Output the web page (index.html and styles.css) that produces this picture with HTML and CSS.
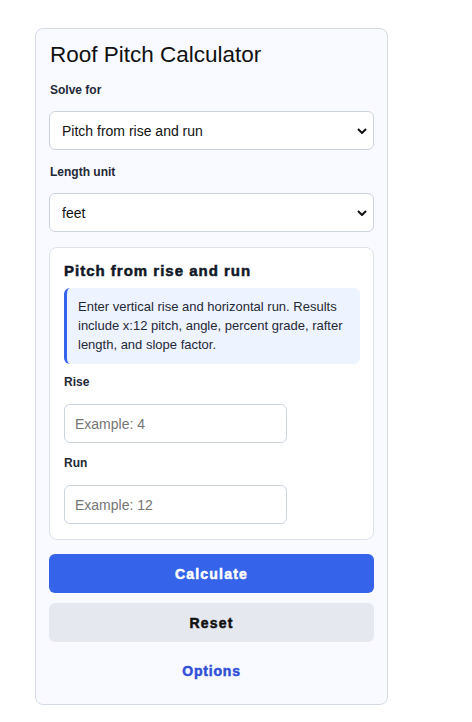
FILE: index.html
```html
<!DOCTYPE html>
<html lang="en">
<head>
    <meta charset="UTF-8">
    <meta name="viewport" content="width=device-width, initial-scale=1.0">
    <title>Roof Pitch Calculator</title>
    <link rel="stylesheet" href="styles.css">
</head>
<body>

    <div class="calc">
        <h1>Roof Pitch Calculator</h1>

        <label class="field-label first" for="mode">Solve for</label>
        <select id="mode" class="field-select">
            <option>Pitch from rise and run</option>
            <option>Rise from pitch and run</option>
            <option>Run from pitch and rise</option>
        </select>

        <label class="field-label" for="unit">Length unit</label>
        <select id="unit" class="field-select">
            <option>feet</option>
            <option>inches</option>
            <option>meters</option>
        </select>

        <div class="panel">
            <h2>Pitch from rise and run</h2>
            <p class="hint">Enter vertical rise and horizontal run. Results include x:12 pitch, angle, percent grade, rafter length, and slope factor.</p>

            <label class="field-label" for="rise">Rise</label>
            <input id="rise" class="field-input" type="text" placeholder="Example: 4">

            <label class="field-label" for="run">Run</label>
            <input id="run" class="field-input" type="text" placeholder="Example: 12">
        </div>

        <button class="btn btn-primary">Calculate</button>
        <button class="btn btn-secondary">Reset</button>

        <a class="options-link" href="#">Options</a>
    </div>

</body>
</html>
```

FILE: styles.css
```css
* {
    box-sizing: border-box;
}
body {
    margin: 0;
    padding: 28px 0 0 35px;
    background: #ffffff;
    font-family: "Liberation Sans", Arial, sans-serif;
    color: #111827;
}
.calc {
    width: 353px;
    background: #f8faff;
    border: 1px solid #d5dbe5;
    border-radius: 8px;
    padding: 11px 13px 25px 13px;
    display: flex;
    flex-direction: column;
}
h1 {
    font-size: 22.5px;
    font-weight: 400;
    margin: 0 0 0 1px;
    line-height: 30px;
    color: #111111;
}
.field-label {
    display: block;
    font-size: 12px;
    font-weight: 700;
    color: #1f2937;
    margin: 15px 0 14px 1px;
}
.field-label.first {
    margin-top: 13px;
}
.field-select {
    width: 325px;
    height: 39px;
    border: 1px solid #cbd3df;
    border-radius: 6px;
    background: #ffffff;
    font-family: inherit;
    font-size: 14px;
    color: #111111;
    padding: 0 12px;
    appearance: none;
    background-image: url("data:image/svg+xml,%3Csvg xmlns='http://www.w3.org/2000/svg' width='10' height='6' viewBox='0 0 10 6'%3E%3Cpath d='M1 1l4 4 4-4' fill='none' stroke='%23111' stroke-width='2'/%3E%3C/svg%3E");
    background-repeat: no-repeat;
    background-position: right 6px center;
}
.panel {
    margin-top: 15px;
    background: #ffffff;
    border: 1px solid #dde2ea;
    border-radius: 8px;
    padding: 14px 13px 15px 14px;
}
h2 {
    font-size: 15px;
    font-weight: 700;
    letter-spacing: 1px;
    -webkit-text-stroke: 0.5px #111827;
    margin: 0 0 8px 0;
    line-height: 18px;
    color: #111827;
}
.hint {
    margin: 0;
    background: #eef4ff;
    border-left: 3px solid #3563e9;
    border-radius: 6px;
    padding: 9px 10px 10px 11px;
    font-size: 13px;
    line-height: 19px;
    color: #1f2937;
}
.panel .field-label {
    margin: 13px 0 15px 0;
}
.panel .hint + .field-label {
    margin-top: 11px;
}
.field-input {
    display: block;
    width: 223px;
    height: 39px;
    border: 1px solid #cbd3df;
    border-radius: 6px;
    background: #ffffff;
    font-family: inherit;
    font-size: 14px;
    padding: 0 10px;
}
.field-input::placeholder {
    color: #757575;
}
.btn {
    width: 325px;
    height: 39px;
    border: none;
    border-radius: 6px;
    font-family: inherit;
    font-size: 14px;
    font-weight: 700;
    letter-spacing: 1.2px;
    cursor: pointer;
}
.btn-primary {
    margin-top: 14px;
    background: #3563e9;
    color: #ffffff;
    -webkit-text-stroke: 0.5px #ffffff;
}
.btn-secondary {
    margin-top: 10px;
    background: #e5e8ef;
    color: #111111;
    -webkit-text-stroke: 0.5px #111111;
}
.options-link {
    align-self: center;
    margin-top: 21px;
    font-size: 14px;
    font-weight: 700;
    letter-spacing: 0.8px;
    -webkit-text-stroke: 0.5px #2f4fd6;
    color: #2f4fd6;
    text-decoration: none;
}
```
